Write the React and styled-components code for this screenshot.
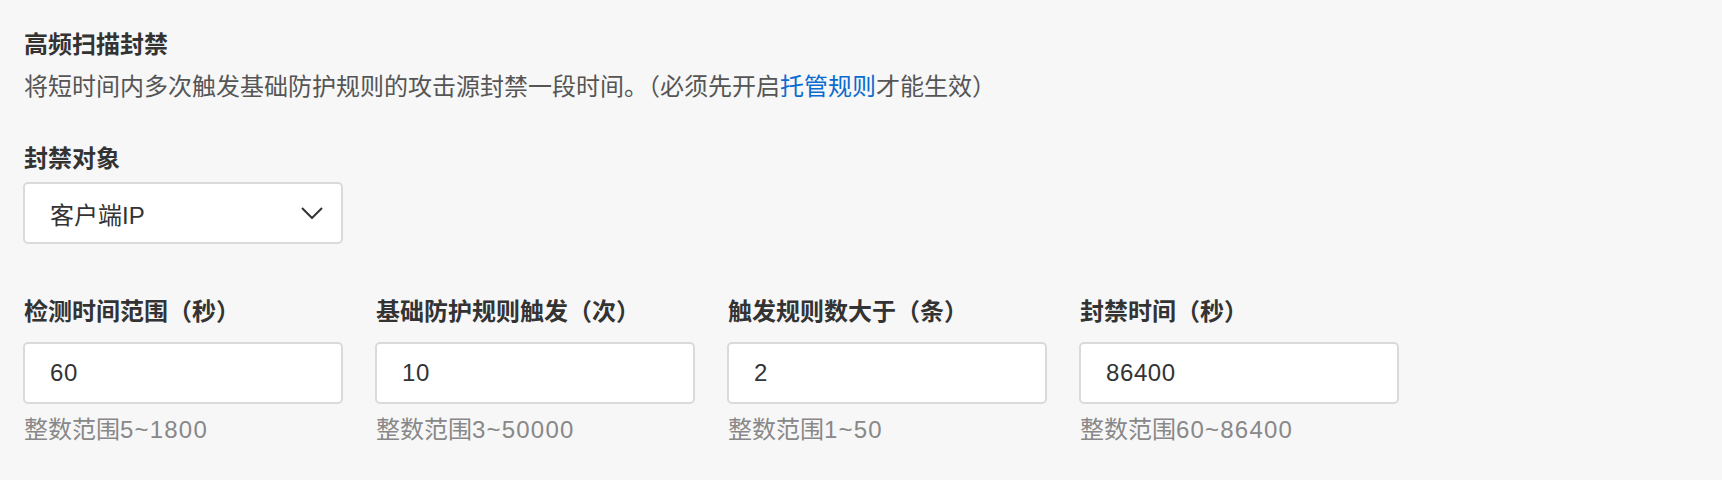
import React from "react";
import styled, { createGlobalStyle } from "styled-components";

const GlobalStyle = createGlobalStyle`
  body {
    margin: 0;
    background: #f7f7f7;
    font-family: "Liberation Sans", "Noto Sans CJK SC", sans-serif;
    color: #333;
  }
`;

const Page = styled.div`
  padding: 29px 23px 30px 23px;
`;

const Title = styled.h3`
  margin: 0 0 0 1px;
  font-size: 24px;
  line-height: 32px;
  font-weight: 700;
  color: #333;
`;

const Desc = styled.p`
  margin: 10px 0 0 1px;
  font-size: 24px;
  line-height: 32px;
  color: #555;
`;

const Link = styled.a`
  color: #0a6bd0;
  text-decoration: none;
`;

const Field = styled.div`
  display: flex;
  flex-direction: column;
  margin-top: ${({ top }) => top || 0}px;
`;

const Label = styled.label`
  margin-left: 1px;
  font-size: 24px;
  line-height: 32px;
  font-weight: 700;
  color: #333;
  margin-bottom: ${({ gap }) => gap}px;
`;

const Select = styled.div`
  box-sizing: border-box;
  width: 320px;
  height: 62px;
  display: flex;
  align-items: center;
  justify-content: space-between;
  padding: 0 18px 0 25px;
  background: #fff;
  border: 2px solid #dadada;
  border-radius: 5px;
  font-size: 24px;
  color: #333;
`;

const Row = styled.div`
  display: grid;
  grid-template-columns: repeat(4, 320px);
  column-gap: 32px;
  margin-top: 52px;
`;

const Input = styled.input`
  box-sizing: border-box;
  width: 320px;
  height: 62px;
  padding: 0 25px;
  background: #fff;
  border: 2px solid #dadada;
  border-radius: 5px;
  font-family: inherit;
  font-size: 24px;
  letter-spacing: 0.6px;
  color: #333;
  outline: none;
`;

const Hint = styled.div`
  margin: 10px 0 0 1px;
  font-size: 24px;
  line-height: 32px;
  color: #888;
`;

const Num = styled.span`
  letter-spacing: 1.2px;
`;

const fields = [
  { label: "检测时间范围（秒）", value: "60", range: "5~1800" },
  { label: "基础防护规则触发（次）", value: "10", range: "3~50000" },
  { label: "触发规则数大于（条）", value: "2", range: "1~50" },
  { label: "封禁时间（秒）", value: "86400", range: "60~86400" },
];

export default function App() {
  return (
    <>
      <GlobalStyle />
      <Page>
        <Title>高频扫描封禁</Title>
        <Desc>
          将短时间内多次触发基础防护规则的攻击源封禁一段时间。（必须先开启<Link href="#">托管规则</Link>才能生效）
        </Desc>

        <Field top={40}>
          <Label gap={7}>封禁对象</Label>
          <Select>
            <span>客户端IP</span>
            <svg width="22" height="12" viewBox="0 0 22 12">
              <polyline points="1,1 11,11 21,1" fill="none" stroke="#333" strokeWidth="2" />
            </svg>
          </Select>
        </Field>

        <Row>
          {fields.map((f) => (
            <Field key={f.label}>
              <Label gap={14}>{f.label}</Label>
              <Input defaultValue={f.value} readOnly />
              <Hint>
                整数范围<Num>{f.range}</Num>
              </Hint>
            </Field>
          ))}
        </Row>
      </Page>
    </>
  );
}
